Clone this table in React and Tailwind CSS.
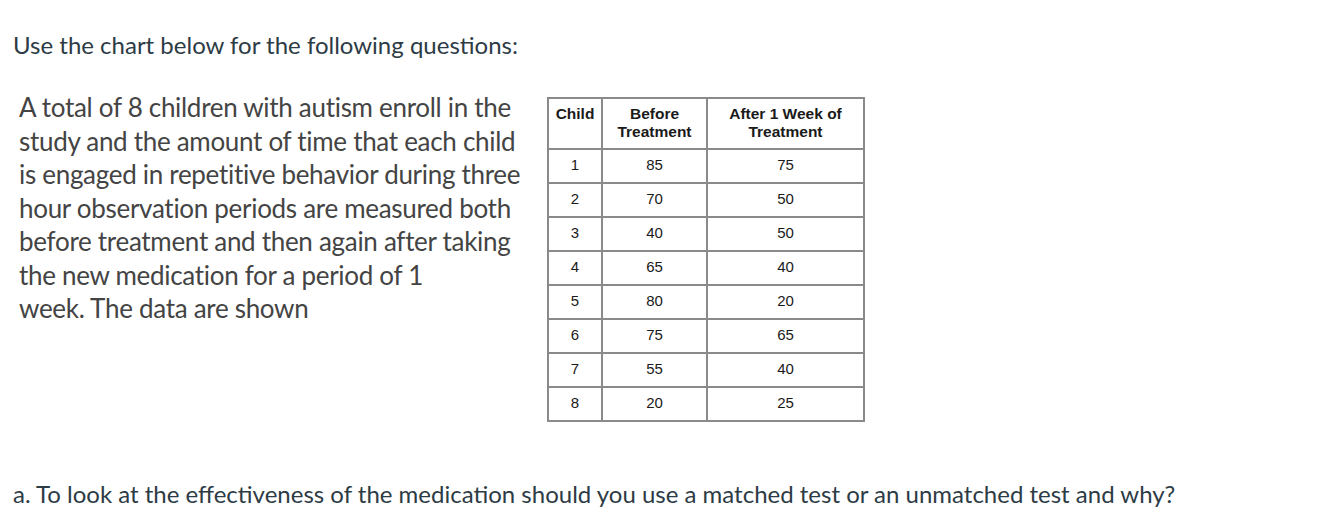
const rows = [
  [1, 85, 75],
  [2, 70, 50],
  [3, 40, 50],
  [4, 65, 40],
  [5, 80, 20],
  [6, 75, 65],
  [7, 55, 40],
  [8, 20, 25],
];

const lines = [
  "A total of 8 children with autism enroll in the",
  "study and the amount of time that each child",
  "is engaged in repetitive behavior during three",
  "hour observation periods are measured both",
  "before treatment and then again after taking",
  "the new medication for a period of 1",
  "week. The data are shown",
];

export default function App() {
  return (
    <div className="bg-white w-[1343px] h-[519px] overflow-hidden pt-[30px] pl-[13px] font-['Lato',sans-serif] text-[#2d3b45]">
      <p className="text-[24px] leading-[30px]">Use the chart below for the following questions:</p>

      <div className="flex items-start mt-[30px]">
        <div className="w-[534px] pl-[6px] pt-[1px] text-[#444] text-[26px] leading-[33.5px] whitespace-nowrap tracking-[-0.3px]">
          {lines.map((l) => (
            <div key={l}>{l}</div>
          ))}
        </div>

        <table className="mt-[7px] border-collapse border-2 border-[#8a8a8a] font-['Liberation_Sans',Arial,sans-serif] text-[#1a1a1a] text-[15px]">
          <thead>
            <tr className="h-[51px] align-top">
              <th className="w-[54px] border-2 border-[#8a8a8a] pt-[6px] font-bold text-[15.5px] leading-[18px]">Child</th>
              <th className="w-[105px] border-2 border-[#8a8a8a] pt-[6px] font-bold text-[15.5px] leading-[18px]">
                Before<br />Treatment
              </th>
              <th className="w-[157px] border-2 border-[#8a8a8a] pt-[6px] font-bold text-[15.5px] leading-[18px]">
                After 1 Week of<br />Treatment
              </th>
            </tr>
          </thead>
          <tbody>
            {rows.map(([c, b, a]) => (
              <tr key={c} className="h-[34px] align-top">
                <td className="border-2 border-[#8a8a8a] text-center pt-[6px] leading-[18px]">{c}</td>
                <td className="border-2 border-[#8a8a8a] text-center pt-[6px] leading-[18px]">{b}</td>
                <td className="border-2 border-[#8a8a8a] text-center pt-[6px] leading-[18px]">{a}</td>
              </tr>
            ))}
          </tbody>
        </table>
      </div>

      <p className="mt-[57px] text-[24px] leading-[30px]">
        a. To look at the effectiveness of the medication should you use a matched test or an unmatched test and why?
      </p>
    </div>
  );
}
